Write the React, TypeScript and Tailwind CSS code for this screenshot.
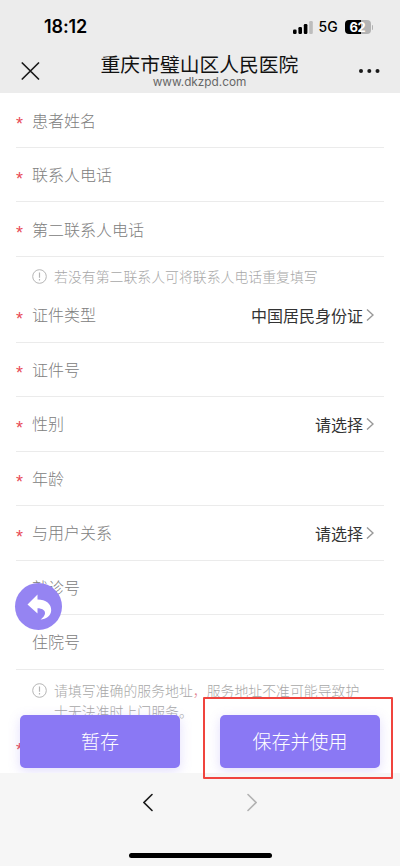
import React from "react";

type RowProps = { label: string; required?: boolean; value?: string };

function Row({ label, required = true, value }: RowProps) {
  return (
    <div className="mx-4 flex h-[54.5px] shrink-0 items-center border-b border-[#ebebeb] text-[16px] leading-6">
      <span className="w-4 pt-[8px] font-['Liberation_Sans',sans-serif] text-[18px] leading-5 text-[#e84a55]">{required ? "*" : ""}</span>
      <span className="-mt-px font-light text-[#808080]">{label}</span>
      {value && (
        <span className="ml-auto flex items-center pr-[10px] text-[#333]">
          {value}
          <svg className="ml-[3px]" width="8" height="14" viewBox="0 0 8 14" fill="none" stroke="#999" strokeWidth="1.4">
            <path d="M1 1.5 7 7 1 12.5" />
          </svg>
        </span>
      )}
    </div>
  );
}

function Hint({ children, className }: { children: React.ReactNode; className: string }) {
  return (
    <div className={"flex shrink-0 pl-8 text-[13.88px] font-light leading-[21px] text-[#a8a8a8] " + className}>
      <svg className="mt-[3px] mr-[7px] shrink-0" width="15" height="15" viewBox="0 0 15 15" fill="none" stroke="#b5b5b5">
        <circle cx="7.5" cy="7.5" r="6.8" />
        <path d="M7.5 3.5v5.3M7.5 10v1.4" strokeWidth="1.2" />
      </svg>
      <span className="whitespace-nowrap">{children}</span>
    </div>
  );
}

export default function App() {
  return (
    <div className="relative flex h-[866px] w-[400px] flex-col overflow-hidden bg-white font-['Noto_Sans_CJK_SC',sans-serif]">
      <header className="h-[93.3px] shrink-0 bg-[#ececec]">
        <div className="flex h-[52px] items-center pt-[2px] pl-[44px] pr-[27px] font-['Inter',sans-serif]">
          <span className="text-[18px] font-semibold leading-5 tracking-[-0.1px] text-black">18:12</span>
          <svg className="ml-auto" width="20" height="13" viewBox="0 0 20 13">
            <rect x="0" y="8.5" width="3.6" height="4.5" rx="1.2" />
            <rect x="5.4" y="6" width="3.6" height="7" rx="1.2" />
            <rect x="10.8" y="3" width="3.6" height="10" rx="1.2" />
            <rect x="16.2" y="0" width="3.6" height="13" rx="1.2" fill="#bdbdbd" />
          </svg>
          <span className="ml-[6px] w-[19px] text-[14px] font-medium leading-5">5G</span>
          <div className="ml-[7px] flex h-[14px] w-[26px] items-center justify-center rounded-[4px] bg-linear-to-r from-black from-62% to-[#b3b3b3] to-62% text-[13px] font-bold leading-none tracking-tight text-white">62</div>
          <span className="ml-px h-[5px] w-[1.5px] rounded-r bg-[#b3b3b3]" />
        </div>
        <div className="flex h-[41px] items-start justify-between pl-[21px] pr-[20px]">
          <svg className="mt-[10px]" width="19" height="18" viewBox="0 0 19 18" stroke="#191919" strokeWidth="1.7" strokeLinecap="round">
            <path d="m1.3 1 16.2 16M17.5 1 1.3 17" />
          </svg>
          <div className="flex flex-col items-center">
            <h1 className="text-[19.8px] font-normal leading-[23px] text-[#111]">重庆市璧山区人民医院</h1>
            <span className="font-['Inter',sans-serif] text-[11.8px] leading-[14px] text-[#666]">www.dkzpd.com</span>
          </div>
          <svg className="mt-[16px]" width="21" height="6" viewBox="0 0 21 6" fill="#191919">
            <circle cx="2" cy="3" r="2" />
            <circle cx="10.3" cy="3" r="2" />
            <circle cx="18.5" cy="3" r="2" />
          </svg>
        </div>
      </header>

      <main className="relative flex h-[679.5px] shrink-0 flex-col overflow-hidden">
        <Row label="患者姓名" />
        <Row label="联系人电话" />
        <Row label="第二联系人电话" />
        <Hint className="h-[31.4px] pt-[9.5px]">若没有第二联系人可将联系人电话重复填写</Hint>
        <Row label="证件类型" value="中国居民身份证" />
        <Row label="证件号" />
        <Row label="性别" value="请选择" />
        <Row label="年龄" />
        <Row label="与用户关系" value="请选择" />
        <Row label="就诊号" required={false} />
        <Row label="住院号" required={false} />
        <Hint className="h-[50px] pt-[10px]">
          请填写准确的服务地址<span className="text-[#e58a96]">，</span>服务地址不准可能导致护
          <br />
          士无法准时上门服务。
        </Hint>
        <Row label="" />

        <button className="absolute top-[490px] left-[15px] flex size-[47px] items-center justify-center rounded-full bg-[#9584f2]">
          <svg width="26" height="28" viewBox="0 0 26 28" fill="white">
            <path d="M1.5 11.5 11.5 1.5V6.5C20 6.5 25.5 11 25.2 17.5C24.8 23 20 26.3 14.5 26.5C21 22.500 21 15.500 11.5 15.300V20.500Z" />
          </svg>
        </button>

        <div className="absolute top-[621.7px] left-5 flex gap-10 text-[19px] font-light text-white">
          <button className="h-[53.5px] w-[160px] rounded-[5px] bg-[#8a78f4] shadow-[0_3px_12px_rgba(138,120,244,0.25)]">暂存</button>
          <button className="h-[53.5px] w-[160px] rounded-[5px] bg-[#8a78f4] shadow-[0_3px_12px_rgba(138,120,244,0.25)]">保存并使用</button>
        </div>
      </main>

      <footer className="flex grow flex-col items-center justify-between bg-[#f6f6f6] pt-[20px] pb-[8px]">
        <div className="flex gap-[94px]">
          <svg width="10" height="19" viewBox="0 0 10 19" fill="none" stroke="#191919" strokeWidth="1.6" strokeLinecap="round">
            <path d="M9 1.5 1 9.5 9 17.5" />
          </svg>
          <svg width="10" height="19" viewBox="0 0 10 19" fill="none" stroke="#b2b2b2" strokeWidth="1.6" strokeLinecap="round">
            <path d="M1 1.5 9 9.5 1 17.5" />
          </svg>
        </div>
        <div className="h-[5px] w-[143px] rounded-full bg-black" />
      </footer>

      <div className="pointer-events-none absolute top-[697px] left-[203px] h-[82px] w-[190px] rounded-[1px] border-2 border-[#f0443e]" />
    </div>
  );
}
